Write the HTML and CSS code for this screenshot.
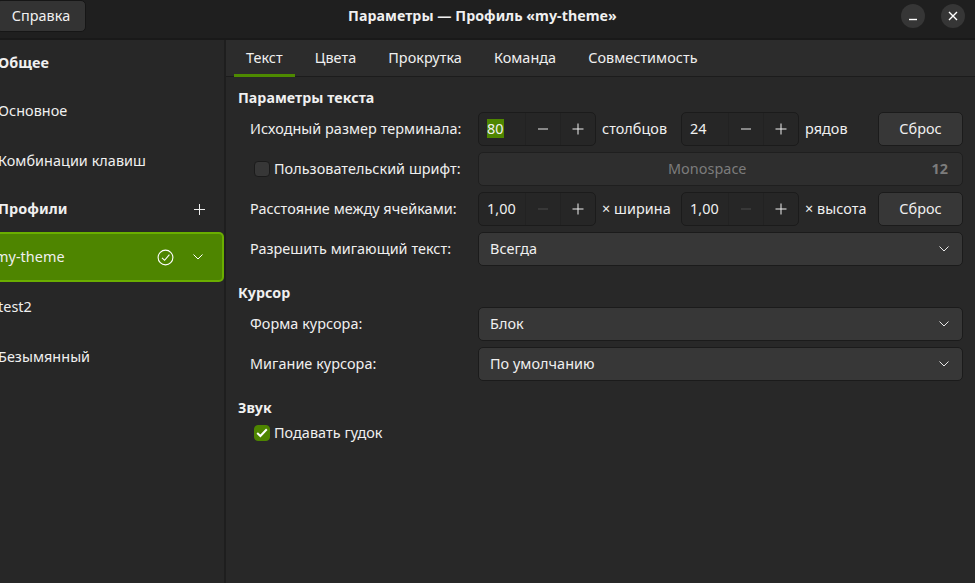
FILE: index.html
```html
<!DOCTYPE html>
<html lang="ru">
<head>
    <meta charset="UTF-8">
    <meta name="viewport" content="width=device-width, initial-scale=1.0">
    <title>Параметры</title>
    <link rel="stylesheet" href="styles.css">
</head>
<body>
    <header class="titlebar">
        <button class="help-btn">Справка</button>
        <div class="window-title">Параметры — Профиль «my-theme»</div>
        <div class="window-btns">
            <span class="circle-btn">
                <svg width="10" height="10" viewBox="0 0 10 10"><path d="M1 8.5H9" stroke="#fff" stroke-width="1.4"/></svg>
            </span>
            <span class="circle-btn">
                <svg width="10" height="10" viewBox="0 0 10 10"><path d="M1 1L9 9M9 1L1 9" stroke="#fff" stroke-width="1.4"/></svg>
            </span>
        </div>
    </header>

    <div class="window-body">
        <aside class="sidebar">
            <div class="side-row side-head">Общее</div>
            <div class="side-row">Основное</div>
            <div class="side-row">Комбинации клавиш</div>
            <div class="side-row side-head">
                <span class="side-text">Профили</span>
                <svg class="side-plus" width="13" height="13" viewBox="0 0 13 13"><path d="M6.5 1V12M1 6.5H12" stroke="#eee" stroke-width="1"/></svg>
            </div>
            <div class="side-row side-active">
                <span class="side-text">my-theme</span>
                <svg class="side-check" width="17" height="17" viewBox="0 0 17 17" fill="none" stroke="#fff" stroke-width="1.1"><circle cx="8.5" cy="8.5" r="7.4"/><path d="M5 8.8L7.6 11.3L12.4 5.6"/></svg>
                <svg class="side-chevron" width="12" height="8" viewBox="0 0 12 8" fill="none" stroke="#fff" stroke-width="1"><path d="M1.5 1.5L6 6L10.5 1.5"/></svg>
            </div>
            <div class="side-row">test2</div>
            <div class="side-row">Безымянный</div>
        </aside>

        <main class="main">
            <nav class="tabs">
                <span class="tab tab-active">Текст</span>
                <span class="tab">Цвета</span>
                <span class="tab">Прокрутка</span>
                <span class="tab">Команда</span>
                <span class="tab">Совместимость</span>
            </nav>

            <div class="content">
                <h2 class="group-title first">Параметры текста</h2>

                <div class="form-row">
                    <label class="form-label">Исходный размер терминала:</label>
                    <div class="size-grid">
                        <div class="spin">
                            <span class="spin-value"><span class="selected">80</span></span>
                            <span class="spin-btn"><svg width="12" height="12" viewBox="0 0 12 12"><path d="M1 6H11" stroke="#e8e8e8"/></svg></span>
                            <span class="spin-btn"><svg width="12" height="12" viewBox="0 0 12 12"><path d="M6 .5V11.5M.5 6H11.5" stroke="#f0f0f0"/></svg></span>
                        </div>
                        <span class="unit">столбцов</span>
                        <div class="spin">
                            <span class="spin-value">24</span>
                            <span class="spin-btn"><svg width="12" height="12" viewBox="0 0 12 12"><path d="M1 6H11" stroke="#e8e8e8"/></svg></span>
                            <span class="spin-btn"><svg width="12" height="12" viewBox="0 0 12 12"><path d="M6 .5V11.5M.5 6H11.5" stroke="#f0f0f0"/></svg></span>
                        </div>
                        <span class="unit">рядов</span>
                        <button class="reset-btn">Сброс</button>
                    </div>
                </div>

                <div class="form-row">
                    <label class="form-label check-label"><span class="check"></span>Пользовательский шрифт:</label>
                    <div class="font-btn"><span class="font-name">Monospace</span><span class="font-size">12</span></div>
                </div>

                <div class="form-row">
                    <label class="form-label">Расстояние между ячейками:</label>
                    <div class="size-grid">
                        <div class="spin">
                            <span class="spin-value">1,00</span>
                            <span class="spin-btn"><svg width="12" height="12" viewBox="0 0 12 12"><path d="M1 6H11" stroke="#4a4a4a"/></svg></span>
                            <span class="spin-btn"><svg width="12" height="12" viewBox="0 0 12 12"><path d="M6 .5V11.5M.5 6H11.5" stroke="#f0f0f0"/></svg></span>
                        </div>
                        <span class="unit">× ширина</span>
                        <div class="spin">
                            <span class="spin-value">1,00</span>
                            <span class="spin-btn"><svg width="12" height="12" viewBox="0 0 12 12"><path d="M1 6H11" stroke="#4a4a4a"/></svg></span>
                            <span class="spin-btn"><svg width="12" height="12" viewBox="0 0 12 12"><path d="M6 .5V11.5M.5 6H11.5" stroke="#f0f0f0"/></svg></span>
                        </div>
                        <span class="unit">× высота</span>
                        <button class="reset-btn">Сброс</button>
                    </div>
                </div>

                <div class="form-row">
                    <label class="form-label">Разрешить мигающий текст:</label>
                    <div class="combo">Всегда<svg width="12" height="8" viewBox="0 0 12 8" fill="none" stroke="#e8e8e8"><path d="M1.5 1.5L6 6L10.5 1.5"/></svg></div>
                </div>

                <h2 class="group-title">Курсор</h2>

                <div class="form-row">
                    <label class="form-label">Форма курсора:</label>
                    <div class="combo">Блок<svg width="12" height="8" viewBox="0 0 12 8" fill="none" stroke="#e8e8e8"><path d="M1.5 1.5L6 6L10.5 1.5"/></svg></div>
                </div>

                <div class="form-row">
                    <label class="form-label">Мигание курсора:</label>
                    <div class="combo">По умолчанию<svg width="12" height="8" viewBox="0 0 12 8" fill="none" stroke="#e8e8e8"><path d="M1.5 1.5L6 6L10.5 1.5"/></svg></div>
                </div>

                <h2 class="group-title">Звук</h2>

                <label class="form-label check-label beep">
                    <span class="check check-on">
                        <svg width="12" height="10" viewBox="0 0 12 10" fill="none" stroke="#fff" stroke-width="2"><path d="M1.2 5L4.4 8L10.8 1.2"/></svg>
                    </span>Подавать гудок</label>
            </div>
        </main>
    </div>
</body>
</html>
```

FILE: styles.css
```css
* {
    box-sizing: border-box;
}
body {
    margin: 0;
    width: 975px;
    height: 583px;
    overflow: hidden;
    background: #282828;
    color: #f0f0f0;
    font-family: "Noto Sans", sans-serif;
    font-size: 14.4px;
    letter-spacing: .05px;
    line-height: 20px;
}

/* titlebar */
.titlebar {
    display: grid;
    grid-template-columns: 1fr auto 1fr;
    align-items: center;
    height: 40px;
    padding: 0 10px 10px 0;
    background: #1f1f1f;
    border-bottom: 2px solid #191919;
}
.help-btn {
    justify-self: start;
    width: 90px;
    height: 32px;
    margin-left: -4px;
    padding: 0;
    background: #333;
    color: #f0f0f0;
    border: 1px solid #161616;
    border-radius: 5px;
    font: inherit;
    letter-spacing: inherit;
}
.window-title {
    font-weight: 700;
    font-size: 14.2px;
}
.window-btns {
    justify-self: end;
    display: flex;
    gap: 16px;
}
.circle-btn {
    display: flex;
    align-items: center;
    justify-content: center;
    width: 24px;
    height: 24px;
    border-radius: 50%;
    background: #363636;
}

.window-body {
    display: flex;
    height: 543px;
}

/* sidebar */
.sidebar {
    flex: none;
    width: 226px;
    background: #272727;
    border-right: 2px solid #1e1e1e;
    overflow: hidden;
}
.side-row {
    display: flex;
    align-items: center;
    height: 50px;
    text-indent: -2px;
}
.side-head {
    height: 46px;
    font-weight: 700;
}
.side-text {
    flex: 1;
}
.side-plus {
    margin-right: 18px;
}
.side-active {
    background: #4e8500;
    border: 2px solid #6aae00;
    border-left: 0;
    border-radius: 0 5px 5px 0;
    text-indent: -5px;
}
.side-check {
    margin-right: 18px;
}
.side-chevron {
    margin-right: 18px;
}

/* tabs */
.main {
    flex: 1;
}
.tabs {
    display: flex;
    gap: 8px;
    height: 37px;
    padding-left: 8px;
    background: #2c2c2c;
    border-bottom: 1px solid #1c1c1c;
}
.tab {
    height: 37px;
    padding: 8px 12px 0;
}
.tab-active {
    border-bottom: 3px solid #4e8a00;
}

/* form */
.content {
    padding: 11px 12px 0;
}
.group-title {
    margin: 17px 0 4px;
    font-size: 14.2px;
    line-height: 20px;
    font-weight: 700;
}
.group-title.first {
    margin-top: 0;
}
.form-row {
    display: grid;
    grid-template-columns: 228px 1fr;
    align-items: center;
    margin-bottom: 6px;
    padding-left: 12px;
}
.form-row:last-of-type {
    margin-bottom: 0;
}
.check-label {
    display: flex;
    align-items: center;
    gap: 4px;
    padding-left: 4px;
}
.check {
    flex: none;
    display: flex;
    align-items: center;
    justify-content: center;
    width: 16px;
    height: 16px;
    background: #373737;
    border: 1px solid #1b1b1b;
    border-radius: 4px;
}
.check-on {
    background: #4e8500;
    border-color: #4e8500;
}
.beep {
    margin-top: 5px;
    padding-left: 16px;
}
.size-grid {
    display: grid;
    grid-template-columns: 118px 73px 118px 67px 85px;
    gap: 6px;
    align-items: center;
}
.spin {
    display: grid;
    grid-template-columns: 46px 35px 35px;
    height: 34px;
    background: #262626;
    border: 1px solid #1b1b1b;
    border-radius: 5px;
}
.spin-value {
    padding: 6px 0 0 8px;
}
.selected {
    background: #4e8500;
}
.spin-btn {
    display: flex;
    align-items: center;
    justify-content: center;
    border-left: 1px solid #222;
}
.reset-btn {
    height: 34px;
    background: #373737;
    color: #f0f0f0;
    border: 1px solid #1b1b1b;
    border-radius: 5px;
    font: inherit;
    letter-spacing: inherit;
}
.font-btn {
    display: flex;
    align-items: center;
    height: 34px;
    padding: 0 14px 0 12px;
    background: #2e2e2e;
    border: 1px solid #1f1f1f;
    border-radius: 5px;
    color: #7c7c7c;
}
.font-name {
    flex: 1;
    padding-right: 8px;
    text-align: center;
}
.font-size {
    font-weight: 700;
}
.combo {
    display: flex;
    align-items: center;
    justify-content: space-between;
    height: 34px;
    padding: 0 12px 0 11px;
    background: #373737;
    border: 1px solid #1b1b1b;
    border-radius: 5px;
}
```
